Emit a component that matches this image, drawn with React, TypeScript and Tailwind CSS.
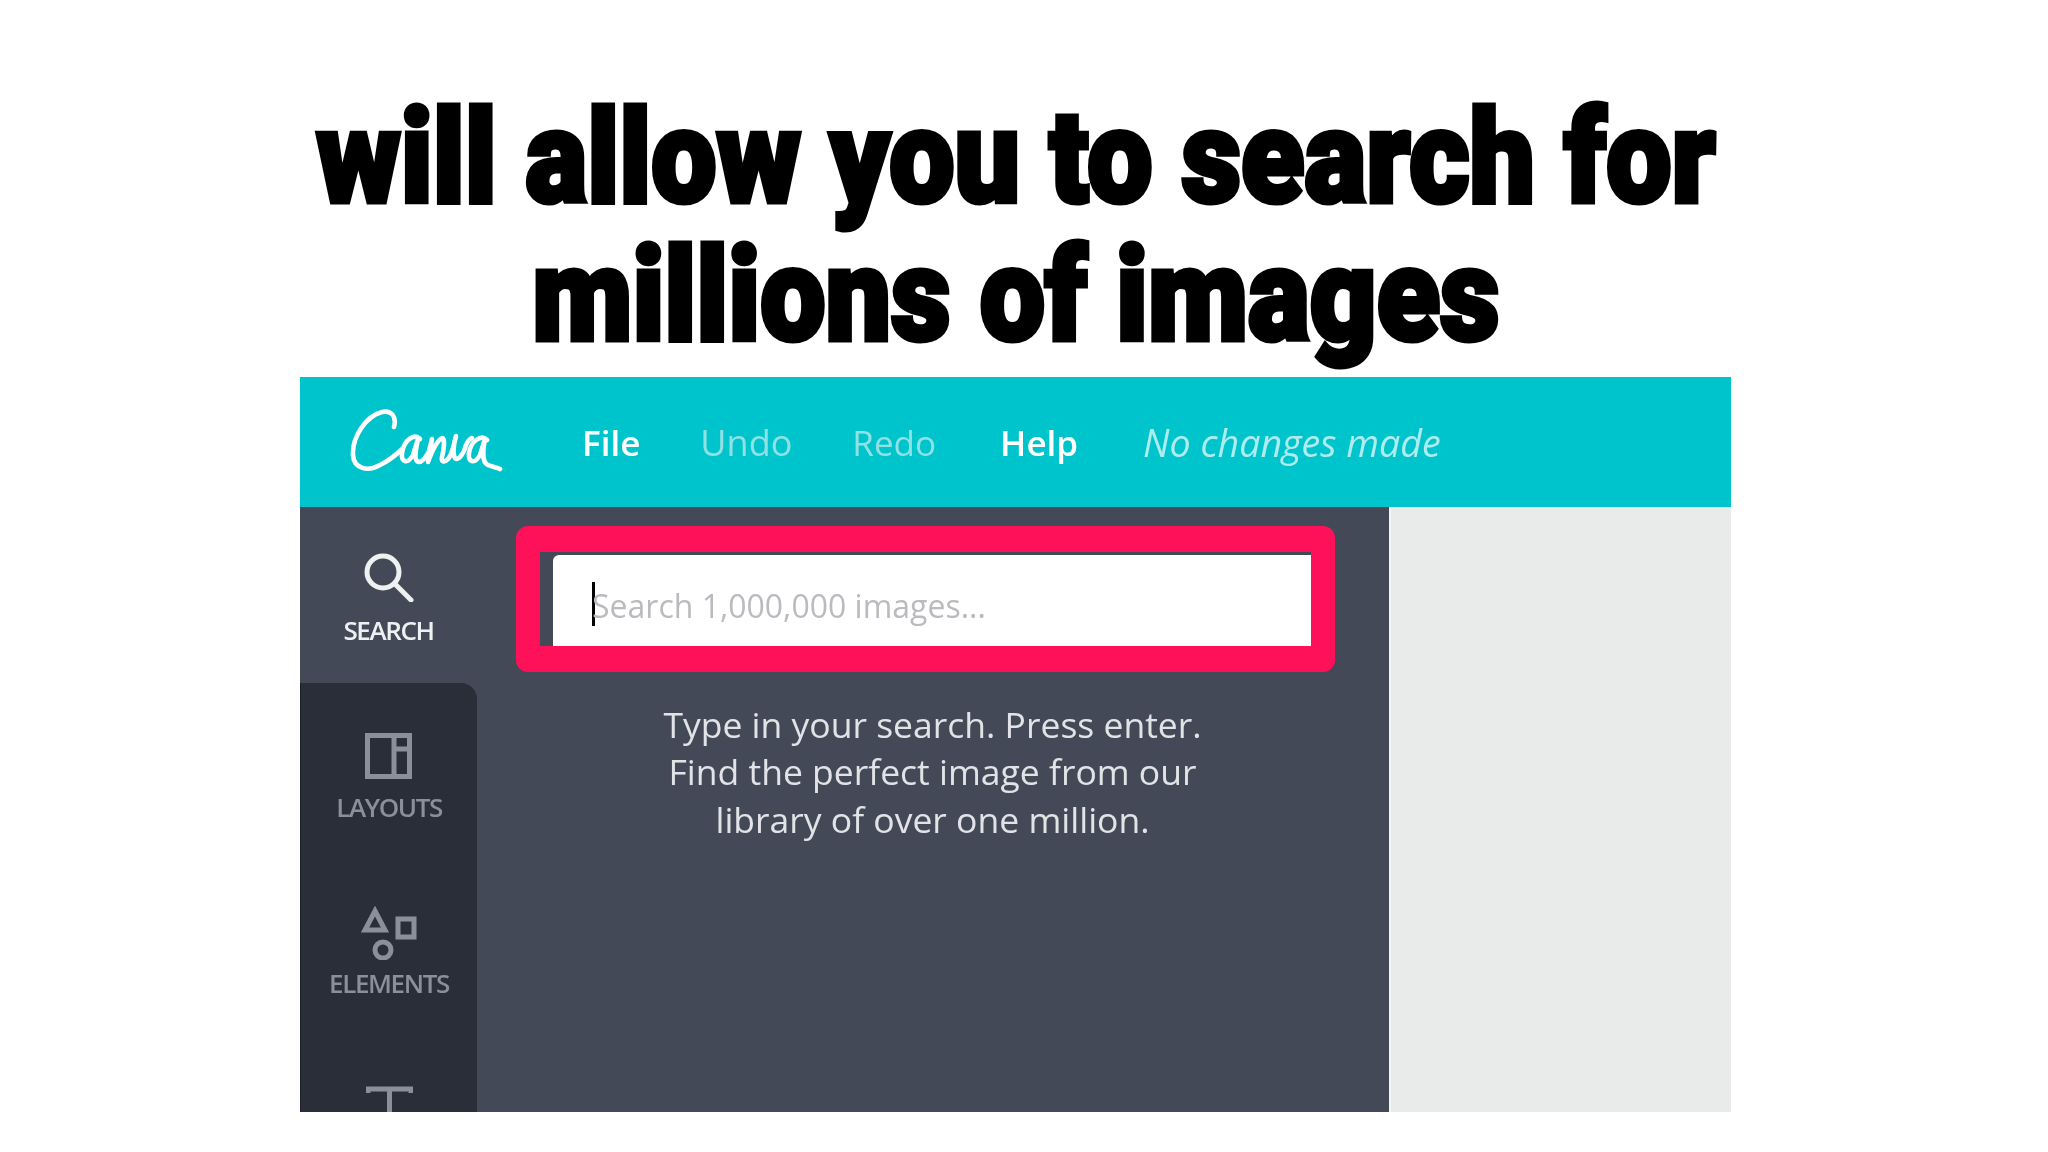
const sans = "font-['Open_Sans',_'Noto_Sans',_sans-serif]";

function CanvaLogo() {
  return (
    <svg className="blur-[0.5px]" width="153" height="67" viewBox="0 0 153 67" fill="none" stroke="#fff" strokeWidth="4.6" strokeLinecap="round" strokeLinejoin="round">
      <path d="M44 18C47 7 41 1 32 3C16 7 2 28 3 46C4 60 18 63 30 56C38 52 46 46 52 40" />
      <path d="M70 30C64 24 54 31 52 44C51 54 58 55 63 46L68 30C65 44 64 52 69 53C73 53 76 48 79 42L82 30L78 53C81 45 86 32 92 29C96 29 93 44 92 48C91 53 94 54 98 50C102 46 104 36 106 27C103 36 103 46 105 49C108 52 112 46 114 42C116 35 118 30 122 29" />
      <path d="M137 31C131 25 121 32 119 44C118 54 125 55 130 46L135 30C132 44 133 54 138 56C142 58 147 58 150 60" />
    </svg>
  );
}

function RailItem({ label, dim, children }: { label: string; dim?: boolean; children: React.ReactNode }) {
  return (
    <div className="flex flex-col items-center">
      {children}
      <div className={`mt-[15px] text-[26px] leading-[26px] font-semibold tracking-[-1.4px] ${dim ? "text-[#8b8f99]" : "text-[#eef0f2]"}`}>
        {label}
      </div>
    </div>
  );
}

export default function App() {
  return (
    <div className={`min-h-[1152px] bg-white ${sans}`}>
      <div className="w-[2032px] pt-[89px] text-center font-['Roboto',_sans-serif] text-[130px] leading-[138px] font-black text-black [-webkit-text-stroke:5px_black]">
        <div className="scale-x-[0.894] whitespace-nowrap">will allow you to search for</div>
        <div className="scale-x-[0.894] whitespace-nowrap">millions of images</div>
      </div>

      <div className="mt-[12px] ml-[300px] flex h-[735px] w-[1431px] flex-col overflow-hidden">
        <header className="flex h-[130px] shrink-0 items-center bg-[#00c4cc] pt-[3px] pl-[50px] text-[35px]">
          <div className="-mt-[3px]">
            <CanvaLogo />
          </div>
          <nav className="ml-[79px] flex items-center gap-[60px] blur-[0.5px]">
            <span className="font-semibold text-white">File</span>
            <span className="text-[36px] text-[#8fe1e4]">Undo</span>
            <span className="text-[#8fe1e4]">Redo</span>
            <span className="ml-[4px] font-semibold text-white">Help</span>
            <span className="ml-[5px] text-[37.6px] text-[#aeecee] italic">No changes made</span>
          </nav>
        </header>

        <div className="flex min-h-0 flex-1">
          <div className="flex w-[1089px] bg-[#434956]">
            <aside className="flex w-[177px] shrink-0 flex-col blur-[0.4px]">
              <div className="flex h-[176px] shrink-0 flex-col items-center pt-[46px]">
                <RailItem label="SEARCH">
                  <svg width="50" height="49" viewBox="0 0 50 49" fill="none" stroke="#eef0f2" strokeWidth="5" strokeLinecap="round">
                    <circle cx="19" cy="19" r="16" />
                    <path d="M31 31L47 47" />
                  </svg>
                </RailItem>
              </div>
              <div className="flex min-h-0 flex-1 flex-col items-center overflow-hidden rounded-tr-[16px] border-l border-[#1d2026] bg-[#2a2e38] pt-[50px]">
                <RailItem label="LAYOUTS" dim>
                  <svg width="47" height="46" viewBox="0 0 47 46" fill="none" stroke="#8b8f99" strokeWidth="5">
                    <rect x="2.5" y="2.5" width="42" height="41" />
                    <path d="M29 2V44M29 16H45" />
                  </svg>
                </RailItem>
                <div className="h-[86px] shrink-0" />
                <RailItem label="ELEMENTS" dim>
                  <svg className="-mb-[5px]" width="56" height="54" viewBox="0 0 56 54" fill="none" stroke="#8b8f99" strokeWidth="5">
                    <path d="M14 5L24 24H4Z" />
                    <rect x="37" y="13" width="16" height="18" />
                    <circle cx="22" cy="44" r="8" />
                  </svg>
                </RailItem>
                <div className="h-[90px] shrink-0" />
                <svg className="shrink-0" width="47" height="40" viewBox="0 0 47 40" fill="none" stroke="#8b8f99" strokeWidth="5">
                  <path d="M2 7V3H45V7M23.5 3V40" />
                </svg>
              </div>
            </aside>

            <main className="w-[858px] pt-[19px] pl-[39px]">
              <div className="h-[146px] rounded-[12px] bg-[#ff1159] pt-[26px] pr-[24px] pb-[26px] pl-[24px]">
                <div className="flex h-[94px] bg-[#434956] pt-[3px] pl-[13px]">
                  <div className="flex flex-1 items-center rounded-tl-[6px] bg-white pt-[6px] pl-[39px]">
                    <span className="h-[44px] w-[3px] shrink-0 bg-black" />
                    <span className="-ml-[3px] pt-[4px] text-[32px] text-[#b9bbbf] blur-[0.4px]">Search 1,000,000 images...</span>
                  </div>
                </div>
              </div>
              <p className="mt-[29px] pl-[14px] text-center text-[35.5px] leading-[47.4px] font-medium text-[#e1e3e7] blur-[0.4px]">
                Type in your search. Press enter.
                <br />
                Find the perfect image from our
                <br />
                library of over one million.
              </p>
            </main>
          </div>
          <div className="flex-1 border-l-2 border-[#f4f5f5] bg-[#e9ebea]" />
        </div>
      </div>
    </div>
  );
}
